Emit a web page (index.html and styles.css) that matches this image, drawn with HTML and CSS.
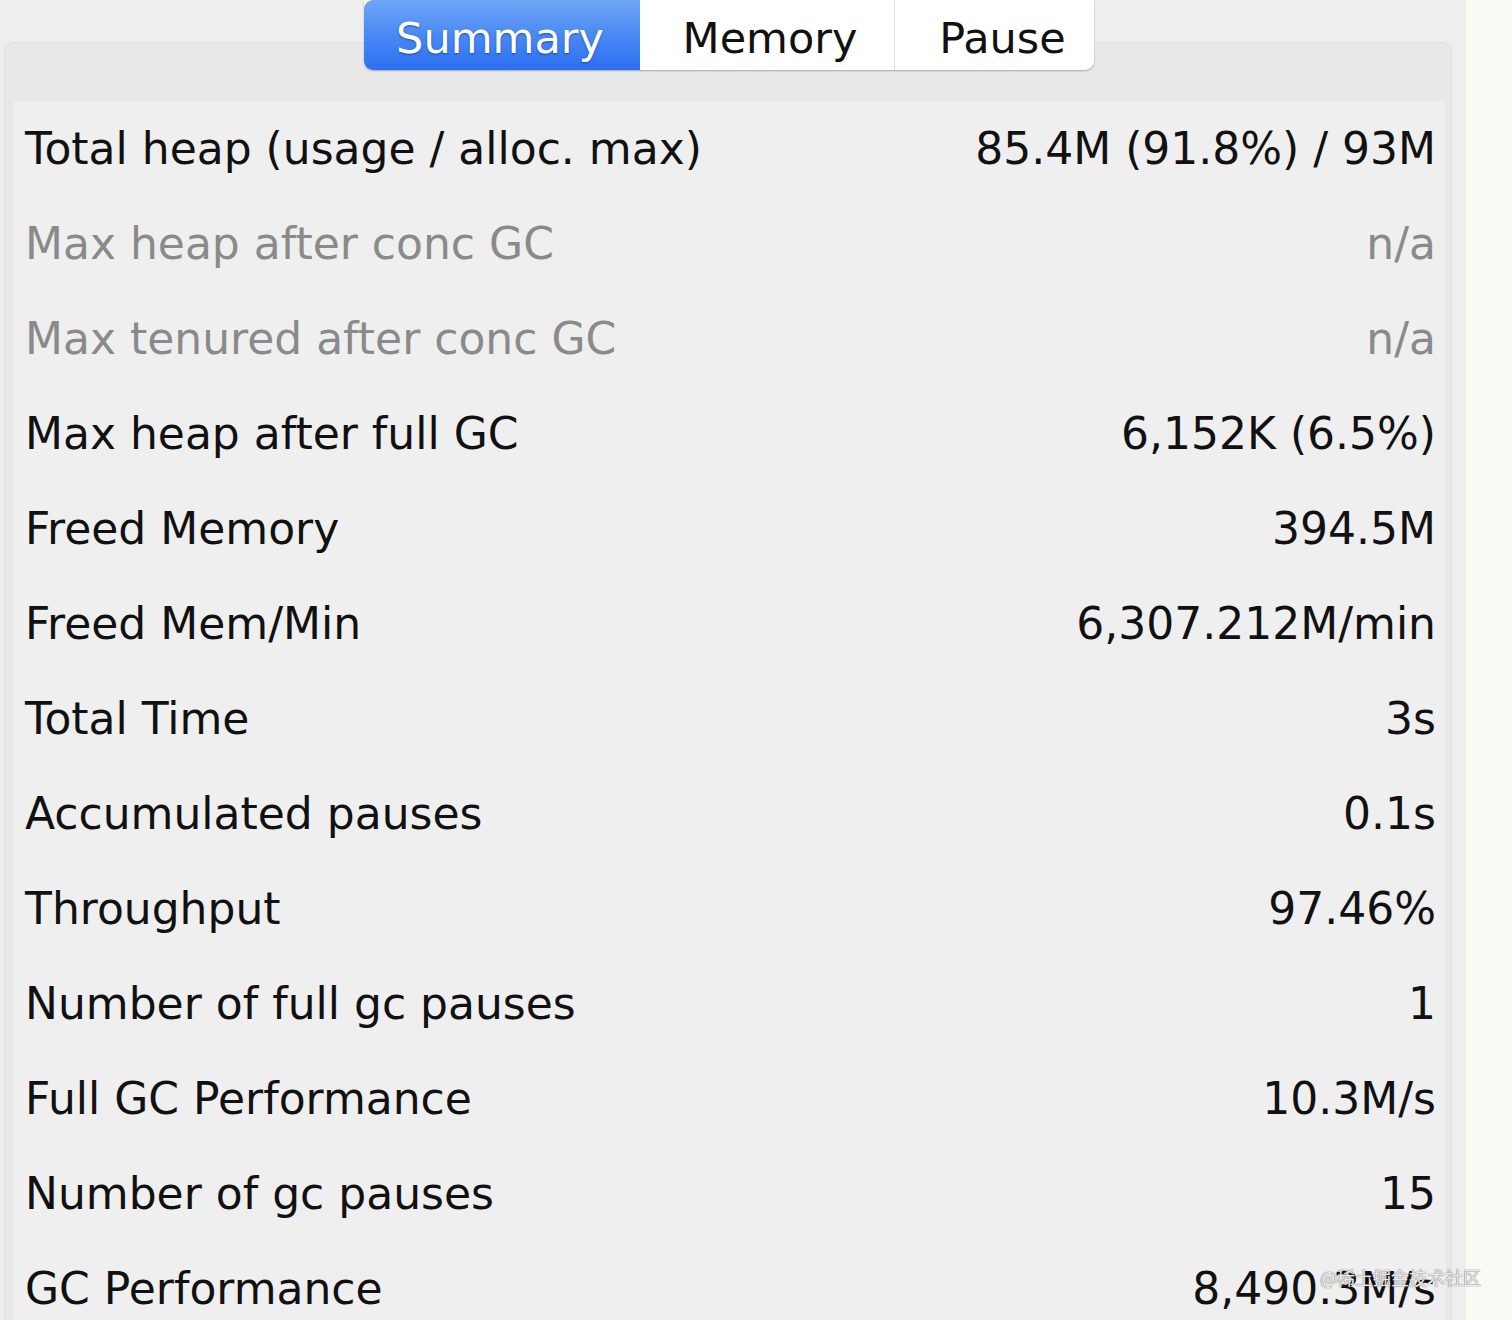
FILE: index.html
```html
<!DOCTYPE html>
<html>
<head>
<meta charset="utf-8">
<link rel="stylesheet" href="styles.css">
</head>
<body>
<div class="page">
  <div class="main">
    <div class="tabs">
      <div class="tab tab-active tab-summary">Summary</div>
      <div class="tab tab-memory">Memory</div>
      <div class="tab tab-pause">Pause</div>
    </div>
    <div class="panel">
      <div class="content">
        <div class="row"><span>Total heap (usage / alloc. max)</span><span>85.4M (91.8%) / 93M</span></div>
        <div class="row row-dim"><span>Max heap after conc GC</span><span>n/a</span></div>
        <div class="row row-dim"><span>Max tenured after conc GC</span><span>n/a</span></div>
        <div class="row"><span>Max heap after full GC</span><span>6,152K (6.5%)</span></div>
        <div class="row"><span>Freed Memory</span><span>394.5M</span></div>
        <div class="row"><span>Freed Mem/Min</span><span>6,307.212M/min</span></div>
        <div class="row"><span>Total Time</span><span>3s</span></div>
        <div class="row"><span>Accumulated pauses</span><span>0.1s</span></div>
        <div class="row"><span>Throughput</span><span>97.46%</span></div>
        <div class="row"><span>Number of full gc pauses</span><span>1</span></div>
        <div class="row"><span>Full GC Performance</span><span>10.3M/s</span></div>
        <div class="row"><span>Number of gc pauses</span><span>15</span></div>
        <div class="row"><span>GC Performance</span><span>8,490.3M/s</span></div>
      </div>
    </div>
  </div>
  <div class="strip"></div>
  <div class="watermark">@稀土掘金技术社区</div>
</div>
</body>
</html>
```
FILE: styles.css
```css
html, body {
  margin: 0;
  padding: 0;
  height: 1320px;
  overflow: hidden;
  background: #eeeeee;
  font-family: "DejaVu Sans", "Noto Sans", sans-serif;
}

.page {
  display: flex;
  height: 1320px;
  position: relative;
}

.main {
  width: 1466px;
  flex: none;
}

.strip {
  flex: 1;
  background: #faf9f4;
}

.tabs {
  position: relative;
  z-index: 2;
  display: flex;
  margin-left: 364px;
  width: 730px;
  height: 70px;
  background: #ffffff;
  border-radius: 0 0 9px 9px;
  box-shadow: 0 1px 2px rgba(0, 0, 0, 0.28);
}

.tab {
  box-sizing: border-box;
  height: 70px;
  padding-top: 6px;
  line-height: 64px;
  font-size: 43px;
  text-align: center;
  color: #111111;
  border-right: 1px solid #dddddd;
}

.tab-summary { width: 276px; padding-right: 4px; }
.tab-memory { width: 255px; padding-left: 6px; }
.tab-pause { width: 199px; padding-left: 16px; border-right: none; }

.tab-active {
  color: #ffffff;
  border-right: none;
  border-radius: 9px 0 0 9px;
  background: linear-gradient(to bottom, #70a6f7 0%, #4d8cf4 45%, #2b6ef1 100%);
  text-shadow: 0 1px 2px rgba(10, 30, 90, 0.55);
}

.panel {
  margin-top: -28px;
  margin-left: 4px;
  width: 1448px;
  box-sizing: border-box;
  border: 1px solid #dfdfdf;
  border-radius: 10px;
  background: #e8e8e8;
  padding: 58px 5px 0 9px;
}

.content {
  background: #efefef;
  padding: 0 10px 0 11px;
}

.row {
  display: flex;
  justify-content: space-between;
  height: 95px;
  line-height: 95px;
  font-size: 44px;
  color: #111111;
  white-space: nowrap;
}

.row-dim {
  color: #8a8a8a;
}

.watermark {
  position: absolute;
  left: 1320px;
  top: 1264px;
  font-family: "Noto Sans CJK SC", sans-serif;
  font-size: 18px;
  color: rgba(255, 255, 255, 0.85);
  text-shadow: 0 0 1px #777777, 0 0 1px #777777;
}
```
